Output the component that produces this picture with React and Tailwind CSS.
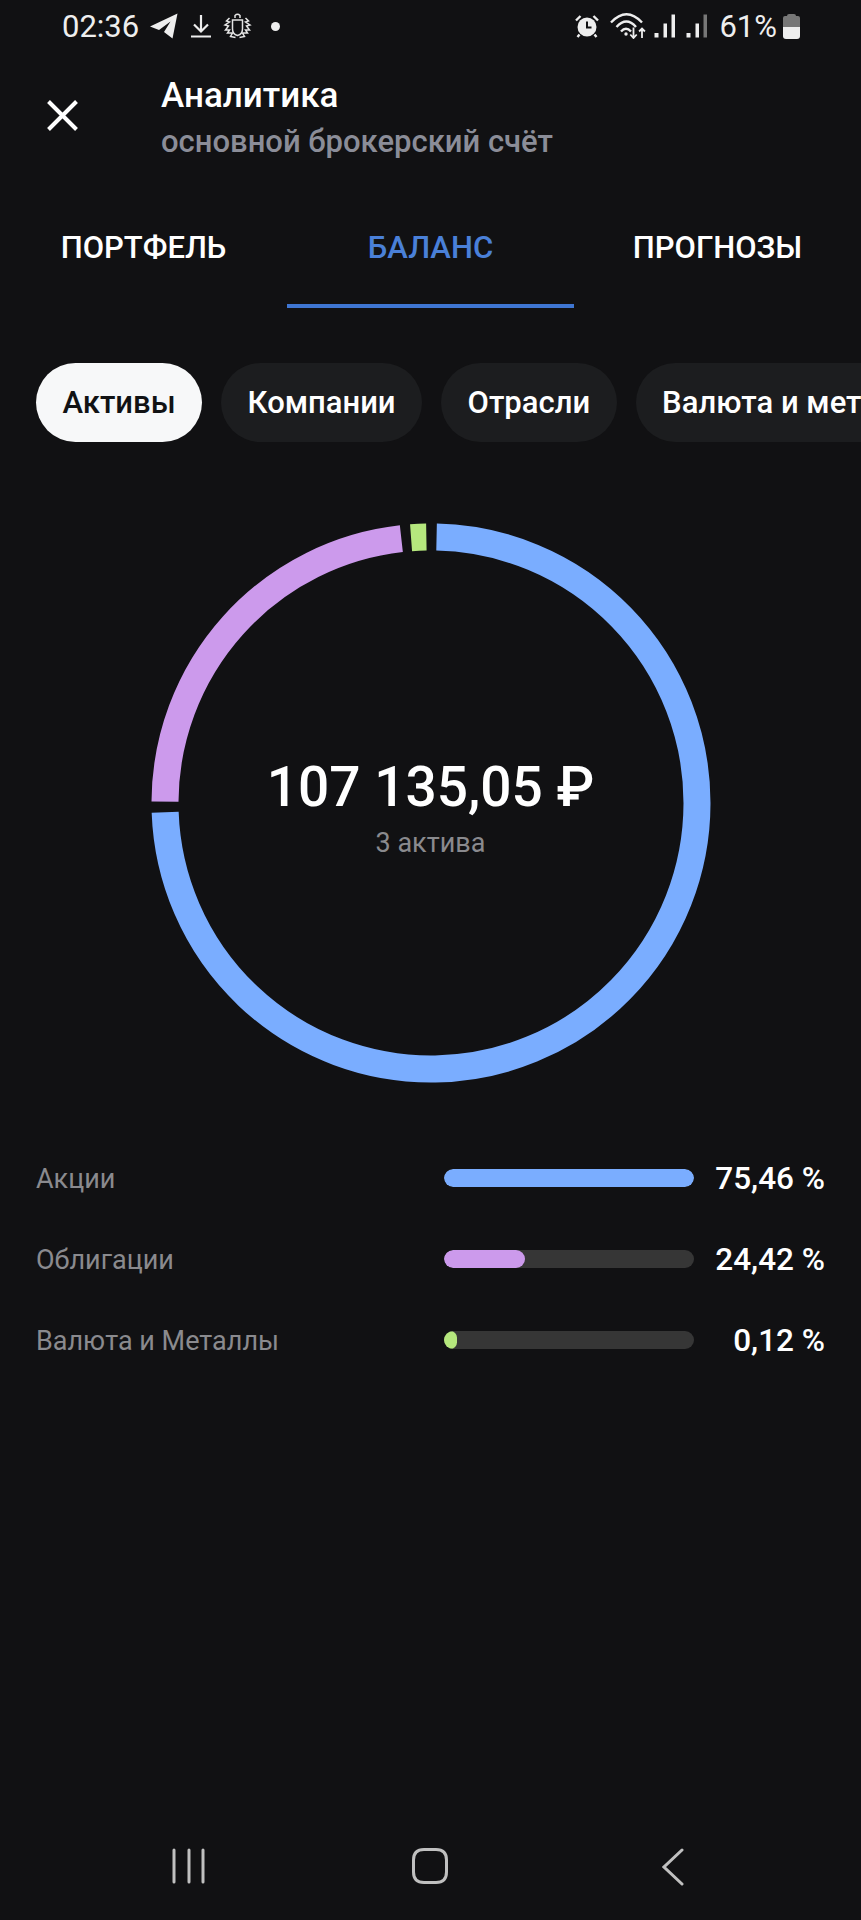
const C = { cx: 280, cy: 280, r: 266 };

function polar(deg) {
  const a = ((deg - 90) * Math.PI) / 180;
  return [C.cx + C.r * Math.cos(a), C.cy + C.r * Math.sin(a)];
}

function arc(start, end) {
  const [x1, y1] = polar(start);
  const [x2, y2] = polar(end);
  const large = end - start > 180 ? 1 : 0;
  return `M${x1} ${y1}A${C.r} ${C.r} 0 ${large} 1 ${x2} ${y2}`;
}

const rows = [
  { label: "Акции", value: "75,46 %", fill: "w-full bg-[#7aadff]" },
  { label: "Облигации", value: "24,42 %", fill: "w-[81px] bg-[#cc9aec]" },
  { label: "Валюта и Металлы", value: "0,12 %", fill: "w-[13px] bg-[#b5e77d]" },
];

function StatusBar() {
  return (
    <div className="flex h-[52px] items-center justify-between pl-[62px] pr-[61px] text-[31px] leading-none text-[#eeeeee]">
      <div className="flex items-center">
        <span>02:36</span>
        <svg className="ml-[10px]" width="29" height="26" viewBox="0 0 28 26" fill="#eeeeee">
          <path d="M28 0.5 L0.5 13.5 L9.5 17 L21 8.5 L14.5 19 L23 25.5 Z" />
        </svg>
        <svg className="ml-[13px]" width="20" height="24" viewBox="0 0 20 24" fill="none" stroke="#eeeeee" strokeWidth="2.2">
          <path d="M10 1V17M3 10.5L10 17.5L17 10.5M0 22.5H20" />
        </svg>
        <svg className="ml-[12px]" width="29" height="26" viewBox="0 0 28 26" fill="none" stroke="#e4e4e4" strokeWidth="1.5">
          <path d="M11.5 5V2.5Q14 0 16.5 2.5V5M9 7H19V16Q19 21 14 22.5Q9 21 9 16Z" />
          <path d="M6 5L3 8L6 9L1.5 12L5 13L2 17L6 17L4 20L9 20L7 23.5L12 24.5" />
          <path d="M22 5L25 8L22 9L26.5 12L23 13L26 17L22 17L24 20L19 20L21 23.5L16 24.5" />
        </svg>
        <span className="ml-[19px] h-[9px] w-[9px] rounded-full bg-[#eeeeee]" />
      </div>
      <div className="flex items-center">
        <svg width="24" height="24" viewBox="0 0 24 24" fill="#eeeeee">
          <circle cx="12" cy="13" r="9.5" />
          <path d="M1 6.5L5.5 2M23 6.5L18.5 2M4.5 20.5L2.5 23M19.5 20.5L21.5 23" stroke="#eeeeee" strokeWidth="2.4" fill="none" />
          <path d="M12 7.5V13.5H16.5" stroke="#111113" strokeWidth="2" fill="none" />
        </svg>
        <svg className="ml-[11px]" width="36" height="26" viewBox="0 0 36 26" fill="none" stroke="#eeeeee" strokeWidth="2.4">
          <path d="M1 9.5Q16.5 -7 32 9.5M6.5 14Q16.5 3 26 14M11 18.5Q16 13 21 18.5" />
          <circle cx="16" cy="21" r="1.7" fill="#eeeeee" stroke="none" />
          <path d="M23.5 14.5V25M20.3 21.5L23.5 25L26.7 21.5M32 25V15.5M29.1 18.5L32 15.5L34.9 18.5" strokeWidth="1.8" />
        </svg>
        <svg className="ml-[8px]" width="22" height="24" viewBox="0 0 22 24" fill="#eeeeee">
          <rect x="0.5" y="19" width="4" height="4.5" />
          <rect x="9.5" y="9.5" width="3.5" height="14" />
          <rect x="17.5" y="0.5" width="3.5" height="23" />
        </svg>
        <svg className="ml-[10px]" width="22" height="24" viewBox="0 0 22 24" fill="#eeeeee">
          <rect x="0.5" y="19" width="4" height="4.5" />
          <rect x="9.5" y="9.5" width="3.5" height="14" />
          <rect x="17.5" y="0.5" width="3.5" height="23" fill="#777777" />
        </svg>
        <span className="ml-[11px]">61%</span>
        <div className="ml-[6px] flex h-[25px] w-[17px] flex-col overflow-hidden rounded-[3px]">
          <div className="mx-auto h-[2px] w-[9px] rounded-t-[2px] bg-[#777777]" />
          <div className="h-[11px] rounded-t-[2px] bg-[#777777]" />
          <div className="flex-1 bg-[#eeeeee]" />
        </div>
      </div>
    </div>
  );
}

function Header() {
  return (
    <div className="mt-[21px] flex items-center pl-[47px]">
      <svg className="mb-[7px]" width="31" height="31" viewBox="0 0 31 31" fill="none" stroke="#ffffff" strokeWidth="4">
        <path d="M1.5 1.5L29.5 29.5M29.5 1.5L1.5 29.5" />
      </svg>
      <div className="ml-[83px]">
        <div className="text-[35px] font-medium leading-[46px] text-white">Аналитика</div>
        <div className="text-[31px] font-medium leading-[46px] text-[#8b8d98]">основной брокерский счёт</div>
      </div>
    </div>
  );
}

function Tabs() {
  return (
    <div className="mt-[56px] grid grid-cols-3 text-center text-[31px] font-medium">
      <div className="h-[87px] pt-[7px] leading-[40px] text-white">ПОРТФЕЛЬ</div>
      <div className="h-[87px] border-b-4 border-[#3f76d2] pt-[7px] leading-[40px] text-[#4a80d8]">БАЛАНС</div>
      <div className="h-[87px] pt-[7px] leading-[40px] text-white">ПРОГНОЗЫ</div>
    </div>
  );
}

function Chips() {
  return (
    <div className="mt-[55px] flex gap-[19px] overflow-hidden pl-[36px] text-[31px] font-medium leading-none">
      <div className="flex h-[79px] shrink-0 items-center rounded-[40px] bg-[#f7f8f9] px-[26.5px] text-[#111214]">Активы</div>
      <div className="flex h-[79px] shrink-0 items-center rounded-[40px] bg-[#1c1d1f] px-[26.5px] text-white">Компании</div>
      <div className="flex h-[79px] shrink-0 items-center rounded-[40px] bg-[#1c1d1f] px-[26.5px] text-white">Отрасли</div>
      <div className="flex h-[79px] shrink-0 items-center rounded-[40px] bg-[#1c1d1f] px-[26.5px] text-white">Валюта и металлы</div>
    </div>
  );
}

function Donut() {
  return (
    <div className="relative mx-auto mt-[81px] h-[560px] w-[560px]">
      <svg width="560" height="560" viewBox="0 0 560 560" fill="none" strokeWidth="27">
        <path d={arc(1.2, 268)} stroke="#7aadff" />
        <path d={arc(270.3, 353.6)} stroke="#cc9aec" />
        <path d={arc(355.7, 359)} stroke="#b5e77d" />
      </svg>
      <div className="absolute inset-0 flex flex-col items-center justify-center pt-[10px]">
        <div className="text-[55px] font-medium leading-[62px] text-white">107 135,05 ₽</div>
        <div className="mt-[7px] text-[27px] leading-[36px] text-[#8a8a8e]">3 актива</div>
      </div>
    </div>
  );
}

function Breakdown() {
  return (
    <div className="mt-[77px] flex flex-col gap-[43px] pl-[36px] pr-[36px]">
      {rows.map((row) => (
        <div key={row.label} className="flex h-[38px] items-center justify-between">
          <div className="text-[27px] leading-none text-[#8a8a8e]">{row.label}</div>
          <div className="flex items-center">
            <div className="mb-[2px] h-[18px] w-[250px] overflow-hidden rounded-[9px] bg-[#363636]">
              <div className={`h-full rounded-[9px] ${row.fill}`} />
            </div>
            <div className="w-[131px] text-right text-[31.5px] font-medium leading-none text-white">{row.value}</div>
          </div>
        </div>
      ))}
    </div>
  );
}

function NavBar() {
  return (
    <div className="mt-auto flex h-[72px] items-start pl-[172px]">
      <svg width="34" height="36" viewBox="0 0 34 36" fill="none" stroke="#c0c0c0" strokeWidth="3" strokeLinecap="round">
        <path d="M2 2V34M17 2V34M31 2V34" />
      </svg>
      <svg className="ml-[206px]" width="36" height="36" viewBox="0 0 36 36" fill="none" stroke="#c0c0c0" strokeWidth="3">
        <path d="M12 1.5H24Q34.5 1.5 34.5 12V24Q34.5 34.5 24 34.5H12Q1.5 34.5 1.5 24V12Q1.5 1.5 12 1.5Z" />
      </svg>
      <svg className="ml-[214px]" width="22" height="38" viewBox="0 0 22 38" fill="none" stroke="#c0c0c0" strokeWidth="3" strokeLinecap="round">
        <path d="M20 2L2 19L20 36" />
      </svg>
    </div>
  );
}

export default function App() {
  return (
    <div
      className="flex h-[1920px] w-[861px] flex-col overflow-hidden bg-[#111113]"
      style={{ fontFamily: "Roboto, 'Noto Sans', sans-serif" }}
    >
      <StatusBar />
      <Header />
      <Tabs />
      <Chips />
      <Donut />
      <Breakdown />
      <NavBar />
    </div>
  );
}
